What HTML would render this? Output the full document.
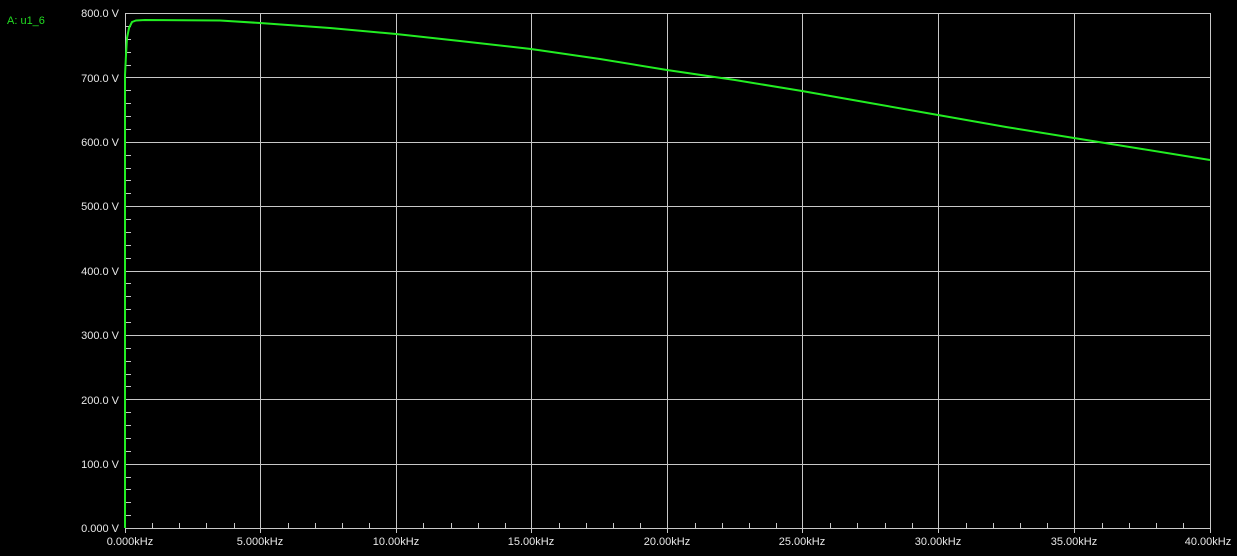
<!DOCTYPE html>
<html><head><meta charset="utf-8"><style>
html,body{margin:0;padding:0;background:#000;width:1237px;height:556px;overflow:hidden}
svg{display:block}
text{font-family:"Liberation Sans",sans-serif;font-size:11px;fill:#e8e8e8}
</style></head><body>
<svg width="1237" height="556" viewBox="0 0 1237 556">
<g stroke="#c8c8c8" stroke-width="1" shape-rendering="crispEdges">
<line x1="125.5" y1="13.5" x2="1210.5" y2="13.5"/>
<line x1="125.5" y1="77.5" x2="1210.5" y2="77.5"/>
<line x1="125.5" y1="142.5" x2="1210.5" y2="142.5"/>
<line x1="125.5" y1="206.5" x2="1210.5" y2="206.5"/>
<line x1="125.5" y1="271.5" x2="1210.5" y2="271.5"/>
<line x1="125.5" y1="335.5" x2="1210.5" y2="335.5"/>
<line x1="125.5" y1="399.5" x2="1210.5" y2="399.5"/>
<line x1="125.5" y1="464.5" x2="1210.5" y2="464.5"/>
<line x1="125.5" y1="528.5" x2="1210.5" y2="528.5"/>
<line x1="125.5" y1="13" x2="125.5" y2="533"/>
<line x1="260.5" y1="13" x2="260.5" y2="533"/>
<line x1="396.5" y1="13" x2="396.5" y2="533"/>
<line x1="531.5" y1="13" x2="531.5" y2="533"/>
<line x1="667.5" y1="13" x2="667.5" y2="533"/>
<line x1="802.5" y1="13" x2="802.5" y2="533"/>
<line x1="938.5" y1="13" x2="938.5" y2="533"/>
<line x1="1074.5" y1="13" x2="1074.5" y2="533"/>
<line x1="1210.5" y1="13" x2="1210.5" y2="533"/>
</g>
<g id="ticks" stroke="#c8c8c8" stroke-width="1" shape-rendering="crispEdges"></g>
<polyline fill="none" stroke="#22ee22" stroke-width="2" points="125,528 125,75 126,55 127,38 129,28 132,22 136,20.5 145,20 220,20.5 260,23 330,28 396,34 460,41 531,49 600,59 667,70 735,80 802,91 870,103 938,115 1006,127 1074,138 1142,149 1210,160"/>
<text x="7" y="24" style="fill:#22dd22">A: u1_6</text>
<g text-anchor="end">
<text x="119" y="17">800.0 V</text>
<text x="119" y="82">700.0 V</text>
<text x="119" y="146">600.0 V</text>
<text x="119" y="210">500.0 V</text>
<text x="119" y="275">400.0 V</text>
<text x="119" y="339">300.0 V</text>
<text x="119" y="404">200.0 V</text>
<text x="119" y="468">100.0 V</text>
<text x="119" y="532">0.000 V</text>
</g>
<g text-anchor="middle">
<text x="130" y="545">0.000kHz</text>
<text x="260" y="545">5.000kHz</text>
<text x="396" y="545">10.00kHz</text>
<text x="531" y="545">15.00kHz</text>
<text x="667" y="545">20.00kHz</text>
<text x="802" y="545">25.00kHz</text>
<text x="938" y="545">30.00kHz</text>
<text x="1074" y="545">35.00kHz</text>
<text x="1208" y="545">40.00kHz</text>
</g>
</svg>
<script>
var g=document.getElementById('ticks'),s='';
for(var i=0;i<40;i++){if(i%5==0)continue;var x=Math.round(125+i*27.125)+0.5;s+='<line x1="'+x+'" y1="523" x2="'+x+'" y2="528"/>';}
for(var j=0;j<40;j++){if(j%5==0)continue;var y=Math.round(13+j*12.875)+0.5;s+='<line x1="125" y1="'+y+'" x2="131" y2="'+y+'"/>';}
g.innerHTML=s;
</script>
</body></html>
